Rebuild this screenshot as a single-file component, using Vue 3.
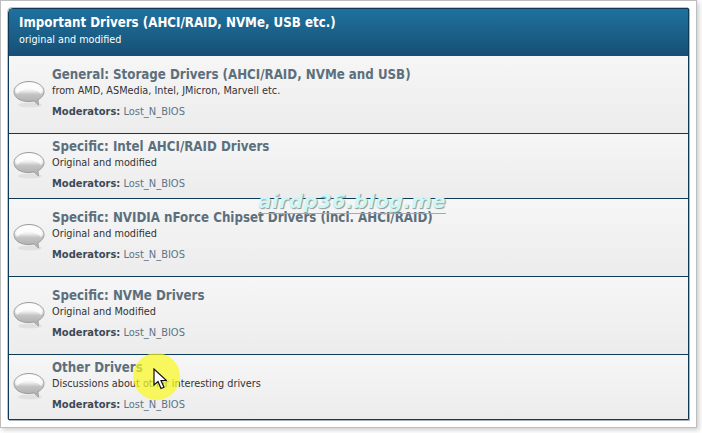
<template>
  <div class="page">
    <div class="frame">
      <section class="forum">
        <header class="forum-head">
          <h2 class="head-title">Important Drivers (AHCI/RAID, NVMe, USB etc.)</h2>
          <p class="head-sub">original and modified</p>
        </header>
        <ul class="rows">
          <li v-for="row in rows" :key="row.title" class="row" :class="{ short: row.short }">
            <svg class="bubble" width="32" height="28" viewBox="0 0 32 28">
              <defs>
                <linearGradient id="bubbleFill" x1="0" y1="0" x2="0" y2="1">
                  <stop offset="0" stop-color="#fbfbfb" />
                  <stop offset="0.38" stop-color="#f0f0f0" />
                  <stop offset="0.55" stop-color="#c4c4c4" />
                  <stop offset="0.85" stop-color="#b2b2b2" />
                  <stop offset="1" stop-color="#d4d4d4" />
                </linearGradient>
              </defs>
              <ellipse cx="17" cy="25" rx="12" ry="2.5" fill="#e0e0e0" />
              <path d="M16 1.500C8 1.500 1 5.800 1 11.500S7 21.500 15 21.500c2 0 4.300-.2 6-.6l4.500 4.100-.6-5.300C28.500 18 31 15 31 11.500 31 5.800 24 1.500 16 1.500Z" fill="url(#bubbleFill)" stroke="#9c9c9c" stroke-width="1" />
              <path d="M16 3C9.500 3 3 6.300 3 11c0 1 .3 2 1 3 3-3.500 7.500-5 12-5s9 1.500 12 5c.7-1 1-2 1-3 0-4.700-6.500-8-13-8Z" fill="#fff" opacity="0.7" />
            </svg>
            <div class="row-body">
              <a class="row-title">{{ row.title }}</a>
              <p class="row-desc">{{ row.desc }}</p>
              <p class="row-mods"><b>Moderators:</b> <span class="mod">Lost_N_BIOS</span></p>
            </div>
          </li>
        </ul>
      </section>
    </div>
    <div class="watermark">airdp36.blog.me</div>
    <div class="spot">
      <svg class="cursor" width="14" height="22" viewBox="0 0 14 22">
        <path d="M1 1v16l4-3.500 3 7 3-1.300-3-6.700h5.500Z" fill="#fff" stroke="#111" stroke-width="1.200" />
      </svg>
    </div>
  </div>
</template>

<script setup>
const rows = [
  { title: 'General: Storage Drivers (AHCI/RAID, NVMe and USB)', desc: 'from AMD, ASMedia, Intel, JMicron, Marvell etc.' },
  { title: 'Specific: Intel AHCI/RAID Drivers', desc: 'Original and modified', short: true },
  { title: 'Specific: NVIDIA nForce Chipset Drivers (incl. AHCI/RAID)', desc: 'Original and modified' },
  { title: 'Specific: NVMe Drivers', desc: 'Original and Modified' },
  { title: 'Other Drivers', desc: 'Discussions about other interesting drivers', short: true }
]
</script>

<style>
html, body { margin: 0; background: #fff; }
</style>

<style scoped>
.page {
  position: relative;
  width: 702px;
  height: 433px;
  overflow: hidden;
  box-sizing: border-box;
  padding: 0 5px 5px 0;
  background: #fff;
  font-family: "DejaVu Sans Condensed", "DejaVu Sans", sans-serif;
}
.frame {
  height: 100%;
  box-sizing: border-box;
  padding: 7px 7px 0;
  background: #fff;
  border: 1px solid #bdbdbd;
  box-shadow: 2px 2px 5px rgba(0, 0, 0, 0.2);
}
.forum {
  border: 1px solid #0f3a55;
  border-top-left-radius: 5px;
  box-shadow: 1px 1px 0 #a9b6bf, -1px -1px 0 #c4c4c4;
}
.forum-head {
  height: 47px;
  box-sizing: border-box;
  padding: 6px 10px 0;
  background: linear-gradient(#1f719f, #165074);
  color: #fff;
}
.head-title {
  margin: 0;
  font-size: 13.2px;
  font-weight: 700;
  line-height: 16px;
}
.head-sub {
  margin: 2px 0 0;
  font-size: 10.7px;
  line-height: 13px;
}
.rows {
  margin: 0;
  padding: 0;
  list-style: none;
}
.row {
  display: flex;
  align-items: center;
  box-sizing: border-box;
  height: 78px;
  padding-left: 4px;
  background: linear-gradient(#f6f6f6, #ececec);
  border-bottom: 1px solid #0f3a55;
}
.row.short { height: 65px; }
.row:last-child { height: 64px; border-bottom: 0; }
.bubble { flex: none; margin: 0 7px 2px 0; }
.row-body { padding-bottom: 3px; }
.row-title {
  display: block;
  font-size: 13.2px;
  font-weight: 700;
  line-height: 16px;
  color: #5c6f7c;
}
.row-desc {
  margin: 1px 0 0;
  font-size: 10.8px;
  line-height: 14px;
  color: #333;
}
.row-mods {
  margin: 7px 0 0;
  font-size: 11px;
  line-height: 14px;
  color: #3d4a55;
}
.mod { color: #5b7487; }
.watermark {
  position: absolute;
  left: 258px;
  top: 190px;
  font: italic 700 20px "DejaVu Sans", sans-serif;
  letter-spacing: 0.15px;
  line-height: 23px;
  color: #cdf6f6;
  text-shadow: 1px 1px 1px #8a9a9a;
  border-bottom: 1px solid #a8a8a8;
}
.spot {
  position: absolute;
  left: 133px;
  top: 353px;
  width: 47px;
  height: 47px;
  border-radius: 50%;
  background: rgba(250, 250, 30, 0.7);
}
.cursor { position: absolute; left: 20px; top: 15px; }
</style>
